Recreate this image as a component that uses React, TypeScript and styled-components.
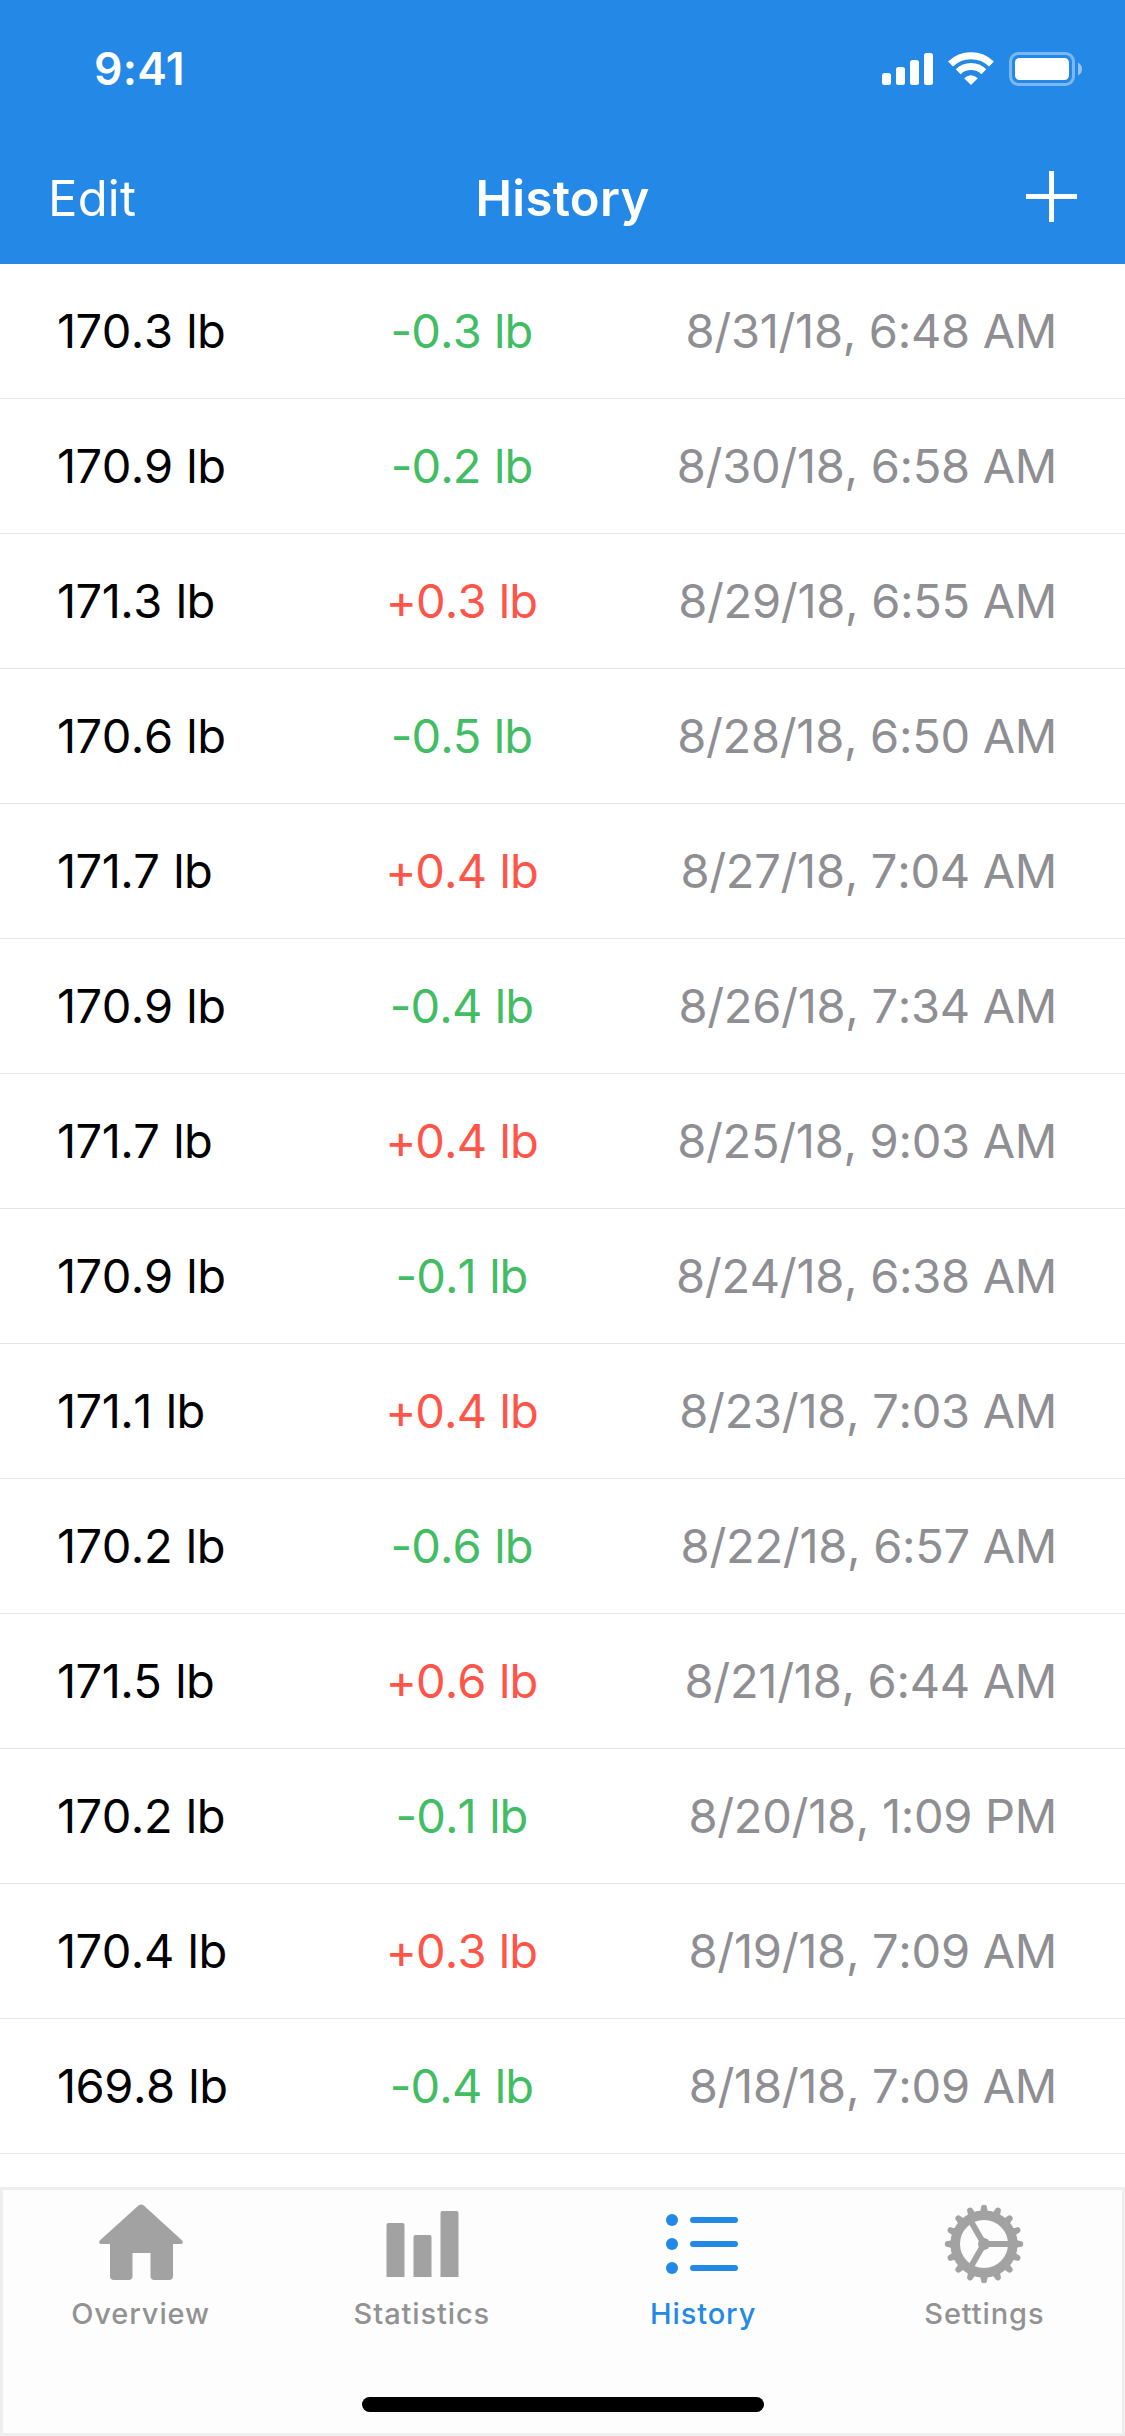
import React from 'react';
import styled, { createGlobalStyle } from 'styled-components';

const BLUE = '#2388e6';
const GREEN = '#42bd64';
const RED = '#ff5549';
const GRAY = '#8e8e93';

const GlobalStyle = createGlobalStyle`
  * { box-sizing: border-box; }
  body {
    margin: 0;
    background: #fff;
    font-family: Inter, 'Liberation Sans', sans-serif;
  }
`;

const Screen = styled.div`
  display: flex;
  flex-direction: column;
  width: 1125px;
  height: 2436px;
  background: #fff;
  overflow: hidden;
`;

const Header = styled.header`
  flex: none;
  height: 264px;
  background: ${BLUE};
  color: #fff;
`;

const StatusBar = styled.div`
  display: flex;
  align-items: center;
  justify-content: space-between;
  height: 132px;
  padding: 6px 43px 0 94px;
`;

const Clock = styled.time`
  font-size: 44.5px;
  font-weight: 600;
  letter-spacing: 0.3px;
  line-height: 54px;
`;

const StatusIcons = styled.svg`
  display: block;
  width: 200px;
  height: 34px;
`;

const NavBar = styled.nav`
  display: grid;
  grid-template-columns: 1fr auto 1fr;
  align-items: center;
  height: 132px;
  padding: 0 48px;
`;

const EditButton = styled.button`
  justify-self: start;
  padding: 1px 0 0;
  border: 0;
  background: none;
  color: inherit;
  font: 400 49px/60px Inter, 'Liberation Sans', sans-serif;
  letter-spacing: 0.2px;
`;

const Title = styled.h1`
  margin: 0;
  padding-top: 1px;
  font-size: 49px;
  font-weight: 600;
  line-height: 60px;
  letter-spacing: 0.3px;
`;

const AddButton = styled.button`
  justify-self: end;
  padding: 0 0 3px;
  border: 0;
  background: none;
  color: inherit;

  svg {
    display: block;
  }
`;

const List = styled.ul`
  flex: 1;
  min-height: 0;
  margin: 0;
  padding: 0;
  list-style: none;
`;

const Row = styled.li`
  display: grid;
  grid-template-columns: 302px 205px 1fr;
  align-items: center;
  height: 135px;
  padding: 0 68px 0 57px;
  border-bottom: 1px solid #e5e5e5;
  font-size: 47px;
  font-kerning: none;
  line-height: 58px;
  white-space: nowrap;
`;

const Weight = styled.span`
  color: #000;
  letter-spacing: -0.5px;
  word-spacing: 1px;
`;

const Change = styled.span<{ $gain: boolean }>`
  color: ${({ $gain }) => ($gain ? RED : GREEN)};
  letter-spacing: -0.9px;
  word-spacing: 1px;
  text-align: center;
`;

const Stamp = styled.time`
  color: ${GRAY};
  letter-spacing: -0.3px;
  text-align: right;
`;

const TabBar = styled.footer`
  flex: none;
  display: flex;
  flex-direction: column;
  align-items: center;
  justify-content: space-between;
  height: 249px;
  padding-bottom: 24px;
  background: #fdfdfd;
  box-shadow: inset 0 0 0 3px #eee;
`;

const Tabs = styled.div`
  display: grid;
  grid-template-columns: repeat(4, 1fr);
  width: 100%;
  padding-top: 12px;
`;

const Tab = styled.a<{ $active?: boolean }>`
  display: flex;
  flex-direction: column;
  align-items: center;
  color: ${({ $active }) => ($active ? BLUE : '#929292')};

  svg {
    display: block;
    width: 90px;
    height: 90px;
    color: ${({ $active }) => ($active ? BLUE : '#a2a2a2')};
  }
`;

const TabLabel = styled.span`
  margin-top: 7px;
  font-size: 29px;
  font-weight: 500;
  line-height: 36px;
  letter-spacing: 0.9px;
`;

const HomeIndicator = styled.div`
  width: 402px;
  height: 15px;
  border-radius: 8px;
  background: #000;
`;

const HouseIcon = () => (
  <svg viewBox="0 0 90 90" fill="currentColor">
    <path d="M42.5 6.6Q45.2 4.600 47.800 6.600L86.200 41.500Q88 45 84.500 45H77V77Q77 81 73 81H58.500Q54.500 81 54.500 77V54H36.500V77Q36.500 81 32.500 81H18Q14 81 14 77V45H5.500Q2 45 3.800 41.500Z" />
  </svg>
);

const BarsIcon = () => (
  <svg viewBox="0 0 90 90" fill="currentColor">
    <path d="M9.500 78V26Q9.500 24 11.500 24H25.500Q27.500 24 27.500 26V78Z" />
    <path d="M36.500 78V38Q36.500 36 38.500 36H52.500Q54.500 36 54.500 38V78Z" />
    <path d="M63.500 78V14Q63.500 12 65.500 12H79.500Q81.500 12 81.500 14V78Z" />
  </svg>
);

const ListIcon = () => (
  <svg viewBox="0 0 90 90" fill="currentColor">
    {[21, 45, 69].map((y) => (
      <g key={y}>
        <circle cx="14" cy={y} r="6" />
        <rect x="32" y={y - 3} width="48" height="6" rx="3" />
      </g>
    ))}
  </svg>
);

const GearIcon = () => (
  <svg viewBox="0 0 90 90" fill="none" stroke="currentColor">
    <circle cx="45" cy="45" r="28.800" strokeWidth="9.600" />
    <circle cx="45" cy="45" r="6" fill="currentColor" stroke="none" />
    {[0, 120, 240].map((a) => (
      <path key={a} d="M45 45H71" strokeWidth="6" transform={`rotate(${a} 45 45)`} />
    ))}
    {Array.from({ length: 16 }, (_, i) => (
      <path
        key={i}
        d="M76 39.500Q78 42 81.200 42A3 3 0 0 1 81.200 48Q78 48 76 50.500Z"
        fill="currentColor"
        stroke="none"
        transform={`rotate(${i * 22.5} 45 45)`}
      />
    ))}
  </svg>
);

const SignalWifiBattery = () => (
  <StatusIcons viewBox="882 52 200 34" fill="#fff">
    <rect x="882" y="73" width="9" height="12" rx="2.500" />
    <rect x="896" y="67" width="9" height="18" rx="2.500" />
    <rect x="910" y="60" width="9" height="25" rx="2.500" />
    <rect x="924" y="53" width="9" height="32" rx="2.500" />
    <g fill="none" stroke="#fff" strokeWidth="7">
      <path d="M950.500 64A29.500 29.500 0 0 1 991.500 64" />
      <path d="M958.200 71.700A18.500 18.500 0 0 1 983.800 71.700" />
    </g>
    <path d="M971 85L964.200 78.200Q971 72.200 977.800 78.200Z" />
    <rect x="1010.500" y="53.500" width="63" height="31" rx="8" fill="none" stroke="#fff" strokeWidth="3" opacity="0.4" />
    <rect x="1015" y="58" width="54" height="22" rx="4.500" />
    <path d="M1078 62.500Q1082 64.500 1082 69T1078 75.500Z" opacity="0.5" />
  </StatusIcons>
);

const entries: [string, string, string][] = [
  ['170.3', '-0.3', '8/31/18, 6:48 AM'],
  ['170.9', '-0.2', '8/30/18, 6:58 AM'],
  ['171.3', '+0.3', '8/29/18, 6:55 AM'],
  ['170.6', '-0.5', '8/28/18, 6:50 AM'],
  ['171.7', '+0.4', '8/27/18, 7:04 AM'],
  ['170.9', '-0.4', '8/26/18, 7:34 AM'],
  ['171.7', '+0.4', '8/25/18, 9:03 AM'],
  ['170.9', '-0.1', '8/24/18, 6:38 AM'],
  ['171.1', '+0.4', '8/23/18, 7:03 AM'],
  ['170.2', '-0.6', '8/22/18, 6:57 AM'],
  ['171.5', '+0.6', '8/21/18, 6:44 AM'],
  ['170.2', '-0.1', '8/20/18, 1:09 PM'],
  ['170.4', '+0.3', '8/19/18, 7:09 AM'],
  ['169.8', '-0.4', '8/18/18, 7:09 AM'],
];

const tabs = [
  { label: 'Overview', Icon: HouseIcon },
  { label: 'Statistics', Icon: BarsIcon },
  { label: 'History', Icon: ListIcon },
  { label: 'Settings', Icon: GearIcon },
];

export default function App() {
  return (
    <>
      <GlobalStyle />
      <Screen>
        <Header>
          <StatusBar>
            <Clock>9:41</Clock>
            <SignalWifiBattery />
          </StatusBar>
          <NavBar>
            <EditButton>Edit</EditButton>
            <Title>History</Title>
            <AddButton aria-label="Add">
              <svg width="51" height="51" viewBox="0 0 51 51" fill="currentColor">
                <path d="M23 0h5v23h23v5H28v23h-5V28H0v-5h23Z" />
              </svg>
            </AddButton>
          </NavBar>
        </Header>
        <List>
          {entries.map(([weight, change, stamp]) => (
            <Row key={stamp}>
              <Weight>{weight} lb</Weight>
              <Change $gain={change.startsWith('+')}>{change} lb</Change>
              <Stamp>{stamp}</Stamp>
            </Row>
          ))}
        </List>
        <TabBar>
          <Tabs>
            {tabs.map(({ label, Icon }) => (
              <Tab key={label} $active={label === 'History'}>
                <Icon />
                <TabLabel>{label}</TabLabel>
              </Tab>
            ))}
          </Tabs>
          <HomeIndicator />
        </TabBar>
      </Screen>
    </>
  );
}
